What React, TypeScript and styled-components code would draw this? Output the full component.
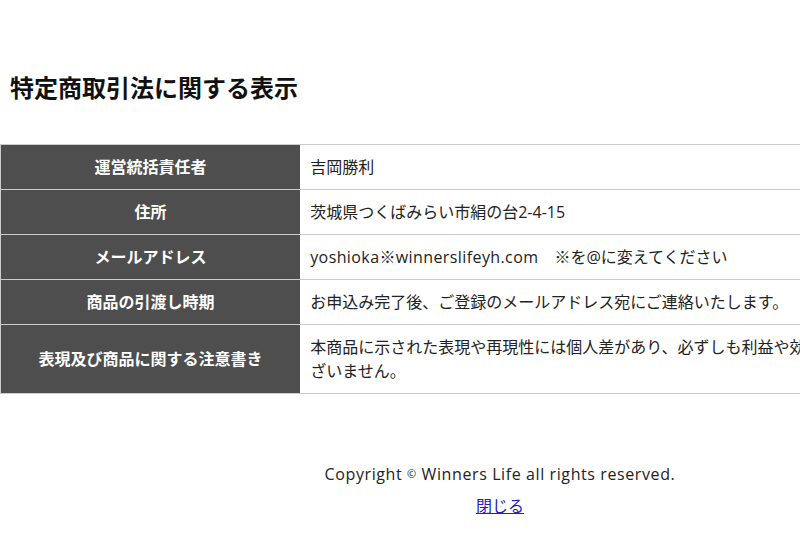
import React from "react";
import styled, { createGlobalStyle } from "styled-components";

const Global = createGlobalStyle`
  html, body { margin: 0; padding: 0; overflow: hidden; background: #fff; }
  body {
    font-family: "Open Sans", "Noto Sans CJK JP", sans-serif;
    color: #222;
  }
`;

const Page = styled.div`
  width: 1000px;
  padding-top: 70px;
`;

const Title = styled.h1`
  margin: 0 0 38px 10px;
  font-size: 24px;
  line-height: 36px;
  font-weight: 700;
  color: #111;
`;

const Table = styled.table`
  width: 100%;
  border-collapse: collapse;
  font-size: 16px;
  line-height: 24px;
`;

const Head = styled.th`
  width: 30%;
  background: #4e4e4e;
  color: #fff;
  font-weight: 700;
  text-align: center;
  padding: 10px;
  border: 1px solid #ccc;
  border-right: none;
`;

const Cell = styled.td`
  padding: 10px;
  text-align: left;
  border: 1px solid #ccc;
  border-left: none;
  color: #222;
`;

const Latin = styled.span`
  letter-spacing: 0.4px;
`;

const Footer = styled.footer`
  margin-top: 68px;
  text-align: center;
  font-size: 16px;
  line-height: 24px;
`;

const Copy = styled.p`
  margin: 0 0 8px;
  color: #222;
  letter-spacing: 0.6px;
`;

const Small = styled.span`
  font-size: 11px;
  vertical-align: 2px;
`;

const Close = styled.a`
  color: #2020c8;
  text-decoration: underline;
`;

const rows: [string, React.ReactNode][] = [
  ["運営統括責任者", "吉岡勝利"],
  ["住所", "茨城県つくばみらい市絹の台2-4-15"],
  [
    "メールアドレス",
    <>
      <Latin>yoshioka※winnerslifeyh.com</Latin>　※を@に変えてください
    </>,
  ],
  ["商品の引渡し時期", "お申込み完了後、ご登録のメールアドレス宛にご連絡いたします。"],
  [
    "表現及び商品に関する注意書き",
    "本商品に示された表現や再現性には個人差があり、必ずしも利益や効果を保証したものではございません。",
  ],
];

export default function App() {
  return (
    <>
      <Global />
      <Page>
        <Title>特定商取引法に関する表示</Title>
        <Table>
          <tbody>
            {rows.map(([h, v]) => (
              <tr key={h}>
                <Head>{h}</Head>
                <Cell>{v}</Cell>
              </tr>
            ))}
          </tbody>
        </Table>
        <Footer>
          <Copy>
            Copyright <Small>©</Small> Winners Life all rights reserved.
          </Copy>
          <Close href="#">閉じる</Close>
        </Footer>
      </Page>
    </>
  );
}
